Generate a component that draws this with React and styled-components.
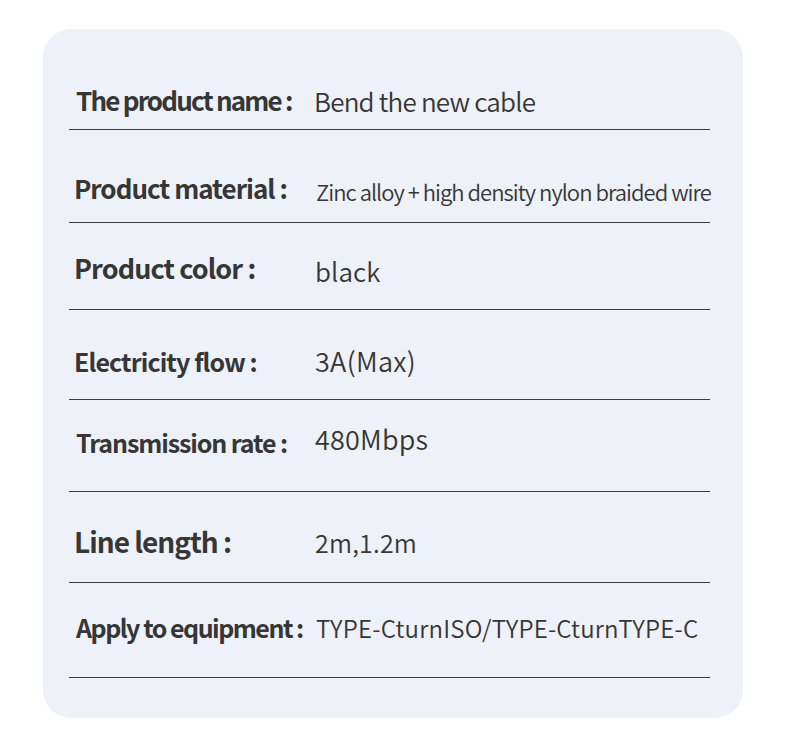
import React from "react";
import styled, { createGlobalStyle } from "styled-components";

const Global = createGlobalStyle`
  html, body { margin: 0; padding: 0; background: #ffffff; }
  body { font-family: "Noto Sans CJK SC", "Noto Sans", sans-serif; }
`;

const Page = styled.div`
  width: 790px;
  height: 736px;
  padding: 29px 0 0 43px;
  box-sizing: border-box;
`;

const Card = styled.div`
  width: 700px;
  height: 689px;
  box-sizing: border-box;
  background: #eef1f8;
  border-radius: 28px;
  padding: 0 33px 0 26px;
  display: flex;
  flex-direction: column;
`;

const Row = styled.div`
  height: ${(p) => p.$h}px;
  box-sizing: border-box;
  border-bottom: 1.5px solid #3c3c3c;
  display: grid;
  grid-template-columns: 242px 1fr;
  align-items: start;
  padding-left: 5px;
`;

const Label = styled.div`
  margin-top: ${(p) => p.$top}px;
  margin-left: ${(p) => p.$dx || 0}px;
  font-size: ${(p) => p.$size}px;
  letter-spacing: ${(p) => p.$ls}px;
  font-weight: 700;
  color: #363636;
  line-height: 1;
  white-space: nowrap;
`;

const Value = styled.div`
  margin-top: ${(p) => p.$top}px;
  margin-left: ${(p) => p.$dx || 0}px;
  font-size: ${(p) => p.$size}px;
  letter-spacing: ${(p) => p.$ls}px;
  font-weight: 350;
  color: #363636;
  line-height: 1;
  white-space: nowrap;
`;

const rows = [
  { h: 101, label: "The product name :", l: { top: 58, size: 26, ls: -1.8, dx: 2 }, value: "Bend the new cable", v: { top: 59, size: 26, ls: -0.8, dx: -2 } },
  { h: 93, label: "Product material :", l: { top: 45, size: 26, ls: -1.0 }, value: "Zinc alloy + high density nylon braided wire", v: { top: 50, size: 22, ls: -0.97, dx: 0 } },
  { h: 87, label: "Product color :", l: { top: 31, size: 27, ls: -0.9 }, value: "black", v: { top: 35, size: 26, ls: 0.1, dx: -1 } },
  { h: 90, label: "Electricity flow :", l: { top: 39, size: 25, ls: -0.9 }, value: "3A(Max)", v: { top: 37, size: 27, ls: 0.3, dx: -1 } },
  { h: 92, label: "Transmission rate :", l: { top: 30, size: 25, ls: -1.1, dx: 2 }, value: "480Mbps", v: { top: 25, size: 27, ls: 0.2, dx: -1 } },
  { h: 91, label: "Line length :", l: { top: 35, size: 28, ls: -1.0 }, value: "2m,1.2m", v: { top: 38, size: 25, ls: 0.2, dx: -1 } },
  { h: 95, label: "Apply to equipment :", l: { top: 32, size: 25, ls: -1.5, dx: 2 }, value: "TYPE-CturnISO/TYPE-CturnTYPE-C", v: { top: 33, size: 24, ls: 0.2, dx: 0 } },
];

export default function App() {
  return (
    <>
      <Global />
      <Page>
        <Card>
          {rows.map((r) => (
            <Row key={r.label} $h={r.h}>
              <Label $top={r.l.top} $size={r.l.size} $ls={r.l.ls} $dx={r.l.dx}>
                {r.label}
              </Label>
              <Value $top={r.v.top} $size={r.v.size} $ls={r.v.ls} $dx={r.v.dx}>
                {r.value}
              </Value>
            </Row>
          ))}
        </Card>
      </Page>
    </>
  );
}
